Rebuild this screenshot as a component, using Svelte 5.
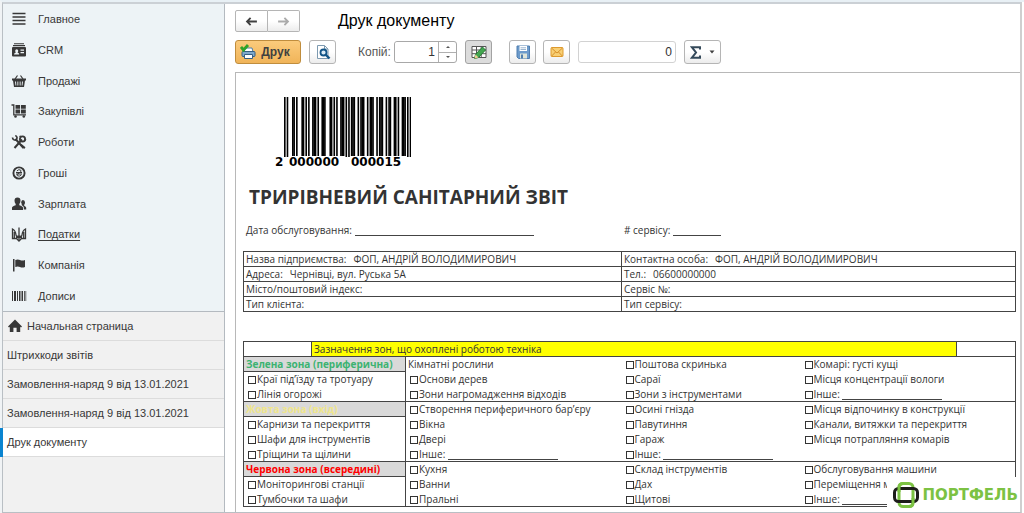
<script lang="ts">
  type Cell = { text: string; check?: boolean; line?: "long" | "short"; tone?: string };

  const sections = [
    { icon: "menu", label: "Главное" },
    { icon: "crm", label: "CRM" },
    { icon: "basket", label: "Продажі" },
    { icon: "cart", label: "Закупівлі" },
    { icon: "tools", label: "Роботи" },
    { icon: "money", label: "Гроші" },
    { icon: "people", label: "Зарплата" },
    { icon: "trident", label: "Податки", hovered: true },
    { icon: "flag", label: "Компанія" },
    { icon: "barcode", label: "Дописи" },
  ];

  const tabs = [
    { label: "Начальная страница", home: true },
    { label: "Штрихкоди звітів" },
    { label: "Замовлення-наряд 9 від 13.01.2021" },
    { label: "Замовлення-наряд 9 від 13.01.2021" },
    { label: "Друк документу", active: true },
  ];

  const details = [
    ["Назва підприємства:", "ФОП, АНДРІЙ ВОЛОДИМИРОВИЧ", "Контактна особа:", "ФОП, АНДРІЙ ВОЛОДИМИРОВИЧ"],
    ["Адреса:", "Чернівці, вул. Руська 5А", "Тел.:", "06600000000"],
    ["Місто/поштовий індекс:", "", "Сервіс №:", ""],
    ["Тип клієнта:", "", "Тип сервісу:", ""],
  ];

  const box = (text: string, line?: "long" | "short"): Cell => ({ text, check: true, line });

  const zones: Cell[][][] = [
    [
      [{ text: "Зелена зона (периферична)", tone: "green" }, { text: "Кімнатні рослини" }, box("Поштова скринька"), box("Комарі: густі кущі")],
      [box("Краї під’їзду та тротуару"), box("Основи дерев"), box("Сараї"), box("Місця концентрації вологи")],
      [box("Лінія огорожі"), box("Зони нагромадження відходів"), box("Зони з інструментами"), box("Інше:", "short")],
    ],
    [
      [{ text: "Жовта зона (вхід)", tone: "yellow" }, box("Створення периферичного бар’єру"), box("Осині гнізда"), box("Місця відпочинку в конструкції")],
      [box("Карнизи та перекриття"), box("Вікна"), box("Павутиння"), box("Канали, витяжки та перекриття")],
      [box("Шафи для інструментів"), box("Двері"), box("Гараж"), box("Місця потрапляння комарів")],
      [box("Тріщини та щілини"), box("Інше:", "long"), box("Інше:", "long"), { text: "" }],
    ],
    [
      [{ text: "Червона зона (всередині)", tone: "red" }, box("Кухня"), box("Склад інструментів"), box("Обслуговування машини")],
      [box("Моніторингові станції"), box("Ванни"), box("Дах"), box("Переміщення м")],
      [box("Тумбочки та шафи"), box("Пральні"), box("Щитові"), box("Інше:", "short")],
    ],
  ];

  // EAN-13
  const L = ["0001101", "0011001", "0010011", "0111101", "0100011", "0110001", "0101111", "0111011", "0110111", "0001011"];
  const invert = (s: string) => [...s].map((c) => (c === "1" ? "0" : "1")).join("");
  const reverse = (s: string) => [...s].reverse().join("");
  const PARITY = ["LLLLLL", "LLGLGG", "LLGGLG", "LLGGGL", "LGLLGG", "LGGLLG", "LGGGLL", "LGLGLG", "LGLGGL", "LGGLGL"];

  function ean13(code: string) {
    const parity = PARITY[+code[0]];
    const left = [...code.slice(1, 7)].map((d, i) => (parity[i] === "L" ? L[+d] : reverse(invert(L[+d]))));
    const right = [...code.slice(7)].map((d) => invert(L[+d]));
    return "101" + left.join("") + "01010" + right.join("") + "101";
  }

  const bars = [...ean13("2000000000015")]
    .map((bit, x) => ({ on: bit === "1", x, guard: x < 3 || x > 91 || (x > 44 && x < 50) }))
    .filter((bar) => bar.on);

  let copies = $state(1);
</script>

{#snippet icon(name: string)}
  <svg class="icon" viewBox="0 0 16 16" aria-hidden="true">
    {#if name === "menu"}
      <path d="M1.500 2.500h13M1.500 6h13M1.500 9.500h13M1.500 13h13" stroke="currentColor" stroke-width="1.500" />
    {:else if name === "crm"}
      <path d="M3 1.200h10v1H3zM2 3h12v1.200H2z" />
      <path fill-rule="evenodd" d="M2 5h12q1 0 1 1v7.500q0 1-1 1H2q-1 0-1-1V6q0-1 1-1zm1 7.500h5.200q0-1.700-1.700-2 .7-.7.7-1.800 0-1.500-1.500-1.500T4.200 8.700q0 1.100.7 1.800-1.900.3-1.900 2zM9.500 7.500v1.200H13V7.500zm0 2.500v1.200H13V10z" />
    {:else if name === "basket"}
      <path d="M4 6l2.500-3.500M12 6L9.500 2.500" stroke="currentColor" stroke-width="1.200" />
      <path fill-rule="evenodd" d="M1 5.500h14v2h-1L13 14H3L2 7.500H1zm3 3l.5 4h.8l-.3-4zm2.400 0v4h.9v-4zm2.300 0v4h.9v-4zm2.300 0l-.3 4h.8l.5-4z" />
    {:else if name === "cart"}
      <path d="M.5 2h2.300v9.800H15" fill="none" stroke="currentColor" stroke-width="1.300" />
      <path d="M4.500 2h4.600v3.800H4.500zM10 2h4.800v3.800H10zM4.500 6.600h4.600v3.800H4.500zM10 6.600h4.800v3.800H10z" />
      <circle cx="4.500" cy="13.500" r="1.300" /><circle cx="12.800" cy="13.500" r="1.300" />
    {:else if name === "tools"}
      <path d="M4.500 5l8 9M11 5.500L3.500 14" stroke="currentColor" stroke-width="2" />
      <path d="M1.500 3.500Q1.800 6 4.200 6.200 6.300 5.500 6 3.200 5.500 1.800 4.200 1.700" fill="none" stroke="currentColor" stroke-width="1.600" />
      <circle cx="11.500" cy="5" r="2.600" fill="none" stroke="currentColor" stroke-width="1.800" />
      <path d="M8 2l2.200-.5-.8 2.500zM13 5l2.500.5-1.300 1.600zM10.500 10l4 3.200-1.300 1.700-4-3.500z" />
    {:else if name === "money"}
      <circle cx="8" cy="8" r="5.600" fill="none" stroke="currentColor" stroke-width="1.900" />
      <path d="M5.800 6q2-2.200 4-.8 1.100 1.500-1.800 2.800-2.900 1.500-1.700 2.700 2.200 1.200 4-.8M5 7.500h6M5 9h6" fill="none" stroke="currentColor" />
    {:else if name === "people"}
      <path d="M6.500 1.500q3 0 3 3.300 0 2-1.200 3.200v1.300q3.700 1 3.700 2.500V14H1v-2.200q0-1.500 3.700-2.500V8Q3.500 6.800 3.500 4.800q0-3.300 3-3.300z" />
      <path d="M12 4q2 0 2 2.500 0 1.500-.8 2.300v1q2 .8 2 2V13.500h-2.400v-2q0-1.500-2.300-2.500.5-.5.200-1.300Q10 7 10.200 6 10.500 4 12 4z" />
    {:else if name === "trident"}
      <path d="M1.500 3v9.500h4l2.500 2.500 2.500-2.500h4V3Q11.500 4.500 11 9q-.3 2.500-3 2.500T5 9Q4.500 4.500 1.500 3zM8 1.500v12M3.300 6v6M12.700 6v6M5.500 12.500Q5.500 10 8 10t2.500 2.500" fill="none" stroke="currentColor" stroke-width="1.300" />
    {:else if name === "flag"}
      <path d="M2 2h1.500v12.500H2zM4.300 3q2.500-1 4.700 0t5 0v7q-2.800 1-5 0t-4.700 0z" />
    {:else if name === "barcode"}
      <path d="M1 3h1v10H1zM3 3h2v10H3zM6 3h1v10H6zM8 3h1.500v10H8zM10.500 3H12v10h-1.500zM13 3h.8v10H13zM14.500 3h.7v10h-.7z" />
    {:else if name === "home"}
      <path d="M8 1.500L15 8.500l-1 1-.8-.7V14H9.600v-4.300H6.400V14H2.800V8.800L2 9.500l-1-1z" />
    {/if}
  </svg>
{/snippet}

{#snippet cellBody(cell: Cell)}
  {#if cell.check}
    <label><input type="checkbox" />{cell.text}</label>
    {#if cell.line}<span class="blank {cell.line}"></span>{/if}
  {:else}
    {cell.text}
  {/if}
{/snippet}

<div class="page">
  <div class="window">
    <aside>
      <nav class="sections">
        {#each sections as section}
          <a href="#{section.icon}" class:hovered={section.hovered}>
            {@render icon(section.icon)}
            <span>{section.label}</span>
          </a>
        {/each}
      </nav>
      <nav class="tabs">
        {#each tabs as tab}
          <a href="#tab" class:active={tab.active}>
            {#if tab.home}{@render icon("home")}{/if}
            <span>{tab.label}</span>
          </a>
        {/each}
      </nav>
    </aside>

    <main>
      <header>
        <div class="history">
          <button aria-label="Назад">
            <svg viewBox="0 0 14 10" aria-hidden="true"><path d="M13 5H2M6 1L2 5l4 4" fill="none" stroke="currentColor" stroke-width="2" /></svg>
          </button>
          <button aria-label="Вперед" disabled>
            <svg viewBox="0 0 14 10" aria-hidden="true"><path d="M1 5h11M8 1l4 4-4 4" fill="none" stroke="currentColor" stroke-width="2" /></svg>
          </button>
        </div>
        <h1>Друк документу</h1>
      </header>

      <div class="toolbar">
        <button class="print">
          <svg class="glyph" viewBox="0 0 16 16" aria-hidden="true">
            <path d="M5 4h7l1 4H4z" fill="#fff" stroke="#4d7fa6" />
            <rect x="2" y="7.500" width="13" height="5" rx="1" fill="#7fa9cc" stroke="#365f84" />
            <path d="M4.500 10.500h8v4h-8z" fill="#fff" stroke="#365f84" />
            <path d="M1 3l2.500 3L8 1" fill="none" stroke="#2fa32b" stroke-width="2.800" />
          </svg>
          Друк
        </button>
        <button class="tool preview" aria-label="Перегляд">
          <svg class="glyph" viewBox="0 0 16 16" aria-hidden="true">
            <path d="M2.500 1.500h7l3.500 3.500v9.500H2.500z" fill="#fff" stroke="#7d9ab0" />
            <path d="M9.500 1.500V5H13" fill="none" stroke="#7d9ab0" />
            <circle cx="8.500" cy="8.500" r="3" fill="#dcecf7" stroke="#135588" stroke-width="1.800" />
            <path d="M10.500 10.500l4 4" stroke="#135588" stroke-width="2.400" />
          </svg>
        </button>
        <label class="copies-label" for="copies">Копій:</label>
        <div class="spinner">
          <input id="copies" type="text" bind:value={copies} />
          <div class="steps">
            <button aria-label="Більше" onclick={() => (copies += 1)}></button>
            <button class="down" aria-label="Менше" onclick={() => (copies -= 1)}></button>
          </div>
        </div>
        <button class="tool pressed" aria-label="Редагування">
          <svg class="glyph" viewBox="0 0 16 16" aria-hidden="true">
            <path d="M1 2.500h14v11H1zM1 6h14M1 9.700h14M5.500 2.500v11M10.200 2.500v11" fill="#fff" stroke="#555" />
            <path d="M3.500 14.500l1-4 7-7.500 3 3-7 7.500z" fill="#43a650" stroke="#277c34" />
            <path d="M3.500 14.500l1-4 3 3z" fill="#f0cd91" />
          </svg>
        </button>
        <button class="tool save" aria-label="Зберегти">
          <svg class="glyph" viewBox="0 0 16 16" aria-hidden="true">
            <path d="M2 2h12.500v12.500H3.500L2 13z" fill="#6d9bcb" stroke="#4f7eb0" />
            <path d="M4.500 2h7.500v5H4.500z" fill="#fff" />
            <path d="M5.500 3.800h5.500M5.500 5.500h5.500" stroke="#9ab4cf" />
            <path d="M5 9.500h7v5H5z" fill="#dfe5d9" />
            <path d="M6 10.500h2v4H6z" fill="#4f7eb0" />
          </svg>
        </button>
        <button class="tool" aria-label="Надіслати">
          <svg class="glyph" viewBox="0 0 16 16" aria-hidden="true">
            <rect x="2" y="3.500" width="12" height="9" rx="1" fill="#f8cf74" stroke="#dd9a2e" />
            <path d="M2.500 4l5.500 5 5.500-5M2.500 12.200L6.500 8M13.500 12.200L9.500 8" fill="none" stroke="#d8922a" />
          </svg>
        </button>
        <input class="total" type="text" value="0" aria-label="Сума" />
        <button class="sum" aria-label="Підсумок">
          <svg class="sigma" viewBox="0 0 11 13" aria-hidden="true"><path d="M10 3.500V1.200H1.800L6 6.500l-4.200 5.300H10V9.500" fill="none" stroke="currentColor" stroke-width="2" /></svg>
          <svg class="caret" viewBox="0 0 6 4" aria-hidden="true"><path d="M.5.500h5L3 3.500z" /></svg>
        </button>
      </div>

      <article>
        <figure>
          <svg class="ean" viewBox="0 0 95 60" preserveAspectRatio="none" aria-hidden="true">
            {#each bars as bar}
              <rect x={bar.x} y="0" width="1.200" height={bar.guard ? 60 : 59} />
            {/each}
          </svg>
          <figcaption><span>2</span><span>000000</span><span>000015</span></figcaption>
        </figure>

        <h2>ТРИРІВНЕВИЙ САНІТАРНИЙ ЗВІТ</h2>

        <div class="meta">
          <p>Дата обслуговування: <span class="blank date"></span></p>
          <p># сервісу: <span class="blank number"></span></p>
        </div>

        <table class="details">
          <colgroup><col class="client" /><col class="contact" /></colgroup>
          <tbody>
            {#each details as [label, value, label2, value2]}
              <tr>
                <td>{label}<span>{value}</span></td>
                <td>{label2}<span>{value2}</span></td>
              </tr>
            {/each}
          </tbody>
        </table>

        <table class="zones">
          <colgroup>
            <col class="a" /><col class="b" /><col class="c" /><col class="d" /><col class="e" /><col class="f" />
          </colgroup>
          <thead>
            <tr>
              <td></td>
              <th colspan="4">Зазначення зон, що охоплені роботою техніка</th>
              <td></td>
            </tr>
          </thead>
          {#each zones as rows}
            <tbody>
              {#each rows as [first, second, third, fourth]}
                <tr>
                  <td colspan="2" class="zone {first.tone ?? ''}">{@render cellBody(first)}</td>
                  <td>{@render cellBody(second)}</td>
                  <td>{@render cellBody(third)}</td>
                  <td colspan="2">{@render cellBody(fourth)}</td>
                </tr>
              {/each}
            </tbody>
          {/each}
        </table>

        <div class="brand">
          <svg viewBox="0 0 26 26" aria-hidden="true">
            <rect x="6" y="1.500" width="14" height="23" rx="4" fill="none" stroke="#7cc243" stroke-width="3" />
            <rect x="1.500" y="6.500" width="23" height="13" rx="4" fill="none" stroke="#1d1d1b" stroke-width="3" />
            <path d="M6 10V5.500q0-4 4-4h6M20 16v4.500q0 4-4 4h-6" fill="none" stroke="#7cc243" stroke-width="3" />
          </svg>
          <span>ПОРТФЕЛЬ</span>
        </div>
      </article>
    </main>
  </div>
</div>

<style>
  :global(body) {
    background: #fff;
    color: #404040;
    font-family: "Liberation Sans", Arial, sans-serif;
    font-size: 12px;
  }

  .page {
    border-left: 2px solid #f0f3f5;
    border-top: 2px solid #e8f0f5;
    padding-right: 2px;
  }

  .window {
    border: 1px solid #b9bfc4;
    border-right: 2px solid #cfcfcf;
    border-top: 2px solid #cbd0d5;
    box-sizing: border-box;
    display: grid;
    grid-template-columns: 222px 1fr;
    min-height: calc(100vh - 3px);
  }

  aside {
    background: #f1f1f1;
    border-right: 1px solid #b4bac0;
    box-sizing: border-box;
    color: #383838;
    font-size: 11px;
  }

  a {
    color: inherit;
    text-decoration: none;
  }

  .sections {
    background: #edf3f6;
    border-bottom: 1px solid #b4bac0;
    display: flex;
    flex-direction: column;
    height: 307px;
  }

  .sections a {
    align-items: center;
    display: flex;
    flex: 1;
    gap: 11px;
    padding-left: 8px;
  }

  .sections .hovered span {
    text-decoration: underline;
    text-underline-offset: 2px;
  }

  .icon {
    fill: currentColor;
    height: 16px;
    width: 16px;
  }

  .tabs a {
    align-items: center;
    border-bottom: 1px solid #dcdcdc;
    display: flex;
    gap: 4px;
    height: 28px;
    padding-left: 4px;
  }

  .tabs .active {
    background: #fff;
    box-shadow: -3px 0 #0a84d0;
  }

  main {
    background: #fff;
    min-width: 0;
    padding: 6px 0 0 10px;
  }

  header {
    align-items: center;
    display: flex;
    gap: 38px;
    margin-bottom: 8px;
  }

  h1 {
    color: #000;
    font-size: 16px;
    font-weight: 400;
    line-height: 22px;
    margin: 0;
  }

  button {
    align-items: center;
    background: linear-gradient(#fff 50%, #ececec);
    border: 1px solid #b5b5b5;
    border-radius: 3px;
    box-sizing: border-box;
    color: #404040;
    display: flex;
    font: inherit;
    justify-content: center;
    padding: 0;
  }

  .history {
    display: flex;
  }

  .history button {
    border-radius: 2px 0 0 2px;
    height: 22px;
    width: 33px;
  }

  .history button + button {
    border-left: 0;
    border-radius: 0 2px 2px 0;
    color: #ababab;
    width: 32px;
  }

  .history svg {
    height: 9px;
    width: 13px;
  }

  .toolbar {
    align-items: center;
    display: flex;
    margin-bottom: 8px;
  }

  .toolbar > button {
    height: 24px;
  }

  .toolbar .print {
    background: linear-gradient(#fbcb7c, #f0b459);
    border-color: #c08d3d;
    font-weight: 700;
    gap: 5px;
    padding-right: 6px;
    width: 66px;
  }

  .glyph {
    height: 16px;
    width: 16px;
  }

  .tool {
    width: 27px;
  }

  .preview {
    margin-left: 8px;
  }

  .copies-label {
    color: #555;
    margin-left: 22px;
    width: 36px;
  }

  input[type="text"] {
    background: #fff;
    border: 1px solid #b0b0b0;
    border-radius: 3px;
    box-sizing: border-box;
    color: #333;
    font: inherit;
    height: 22px;
    padding: 0 3px;
    text-align: right;
  }

  .spinner {
    border: 1px solid #a8a8a8;
    border-radius: 3px;
    box-sizing: border-box;
    display: flex;
    height: 22px;
    width: 63px;
  }

  .spinner input[type="text"] {
    border: 0;
    flex: 1;
    height: 20px;
    min-width: 0;
  }

  .steps {
    border-left: 1px solid #b0b0b0;
    display: flex;
    flex-direction: column;
    width: 17px;
  }

  .steps button {
    background: none;
    border: 0;
    border-radius: 0;
    flex: 1;
  }

  .steps button::after {
    border: 2px solid transparent;
    border-bottom-color: #555;
    border-top: 0;
    content: "";
  }

  .steps .down {
    border-top: 1px solid #b0b0b0;
  }

  .steps .down::after {
    border: 2px solid transparent;
    border-bottom: 0;
    border-top-color: #555;
  }

  .pressed {
    background: #dcdcdc;
    border-color: #a3a3a3;
    margin-left: 8px;
  }

  .save {
    margin: 0 7px 0 17px;
  }

  .toolbar .total {
    border-color: #d2d2d2;
    margin: 0 8px;
    width: 98px;
  }

  .sum {
    gap: 8px;
    width: 37px;
  }

  .sigma {
    color: #34495a;
    height: 13px;
    width: 11px;
  }

  .caret {
    fill: #404040;
    height: 4px;
    width: 6px;
  }

  article {
    border: 1px solid #b8b8b8;
    border-bottom: 0;
    border-right: 0;
    color: #333;
    font-family: "Open Sans", sans-serif;
    font-size: 10px;
    line-height: 14px;
    padding: 24px 5px 5px 7px;
    position: relative;
  }

  figure {
    margin: 0 0 0 32px;
    width: 136px;
  }

  .ean {
    display: block;
    fill: #000;
    height: 60px;
    margin-left: 9px;
    width: 127px;
  }

  figcaption {
    color: #000;
    display: grid;
    font-family: "DejaVu Sans", sans-serif;
    font-size: 12px;
    font-weight: 700;
    grid-template-columns: 14px 62px 1fr;
    line-height: 10px;
  }

  h2 {
    color: #333;
    font-size: 19px;
    font-weight: 700;
    line-height: 28px;
    margin: 16px 0 12px 6px;
  }

  .meta {
    display: grid;
    grid-template-columns: 378px 1fr;
    margin-bottom: 14px;
    padding-left: 3px;
  }

  p {
    margin: 0;
  }

  .blank {
    border-bottom: 1px solid #444;
    display: inline-block;
    height: 10px;
    vertical-align: -2px;
  }

  .date {
    width: 179px;
  }

  .number {
    width: 48px;
  }

  .long {
    width: 110px;
  }

  .short {
    width: 100px;
  }

  table {
    border: 1px solid #444;
    border-collapse: collapse;
    table-layout: fixed;
    width: 100%;
  }

  td,
  th {
    box-sizing: border-box;
    height: 15px;
    line-height: 14px;
    padding: 0 0 0 2px;
    text-align: left;
    white-space: nowrap;
  }

  .details {
    margin-bottom: 29px;
  }

  .details td {
    border: 1px solid #444;
  }

  .details span {
    margin-left: 7px;
  }

  .client {
    width: 378px;
  }

  .contact {
    width: 394px;
  }

  .a {
    width: 68px;
  }

  .b {
    width: 94px;
  }

  .c {
    width: 216px;
  }

  .d {
    width: 179px;
  }

  .e {
    width: 156px;
  }

  .f {
    width: 59px;
  }

  thead td,
  th {
    border: 1px solid #444;
    font-weight: 400;
  }

  th {
    background: #ff0;
  }

  tbody {
    border-bottom: 1px solid #444;
  }

  .zone {
    border-right: 1px solid #444;
  }

  .green,
  .yellow,
  .red {
    background: #d9d9d9;
    border: 1px solid #444;
    font-weight: 700;
  }

  .green {
    color: #3cb371;
  }

  .yellow {
    color: #f0e68c;
  }

  .red {
    color: #f00;
  }

  input[type="checkbox"] {
    appearance: none;
    background: #fff;
    border: 1px solid #333;
    box-sizing: border-box;
    height: 8px;
    margin: 0 1px 0 2px;
    vertical-align: -1px;
    width: 8px;
  }

  /* sits over the corner of the printed form */
  .brand {
    align-items: center;
    background: #fff;
    bottom: 4px;
    display: flex;
    gap: 3px;
    padding: 5px 2px 0 6px;
    position: absolute;
    right: 0;
  }

  .brand svg {
    height: 26px;
    width: 26px;
  }

  .brand span {
    color: #7cc243;
    font-family: "DejaVu Sans", sans-serif;
    font-size: 15px;
    font-weight: 700;
  }
</style>
